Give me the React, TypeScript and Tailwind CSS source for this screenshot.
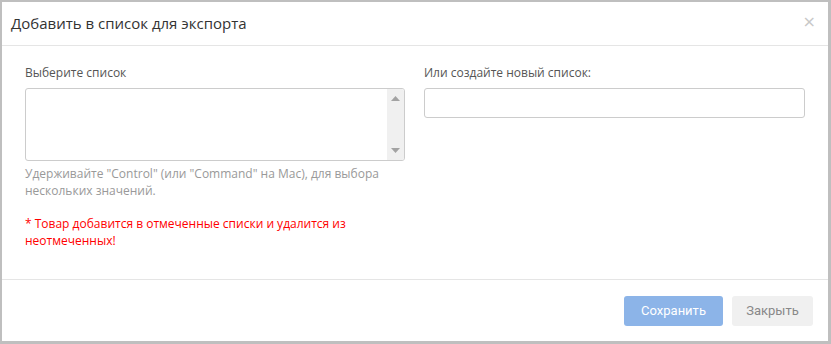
export default function App() {
  return (
    <div className="w-[831px] h-[344px] bg-[#bfbfbf] pl-[2px] pt-[2px] pr-[3px] pb-[3px] font-['Open_Sans',sans-serif]">
      <div className="bg-white h-full flex flex-col">
        {/* header */}
        <div className="h-[44px] flex items-center justify-between pl-[9px] pr-[12px] border-b border-[#e5e5e5]">
          <h4 className="text-[15px] text-[#333] leading-none">Добавить в список для экспорта</h4>
          <button className="text-[#c8c8c8] text-[16px] leading-none font-['DejaVu_Sans',sans-serif] -mt-[4px]">×</button>
        </div>

        {/* body */}
        <div className="flex-1 flex gap-[19px] pl-[22px] pr-[23px] pt-[18px] text-[12px]">
          <div className="w-[381px]">
            <label className="block text-[#555] leading-[17px] mb-[7px] pl-[1px]">Выберите список</label>
            <div className="h-[73px] border border-[#ccc] rounded-[3px] flex justify-end overflow-hidden ml-[1px]">
              <div className="w-[17px] bg-[#f0f0f0] flex flex-col items-center justify-between py-[7px]">
                <svg width="9" height="5" viewBox="0 0 9 5">
                  <path d="M0 5 L4.5 0 L9 5 Z" fill="#a3a3a3" />
                </svg>
                <svg width="9" height="5" viewBox="0 0 9 5">
                  <path d="M0 0 L4.5 5 L9 0 Z" fill="#a3a3a3" />
                </svg>
              </div>
            </div>
            <p className="text-[#999] leading-[17px] mt-[4px] pl-[1px]">
              Удерживайте "Control" (или "Command" на Mac), для выбора нескольких значений.
            </p>
            <p className="text-[#ff0000] leading-[17px] mt-[16px] pl-[1px]">
              * Товар добавится в отмеченные списки и удалится из неотмеченных!
            </p>
          </div>
          <div className="w-[381px]">
            <label className="block text-[#555] leading-[17px] mb-[7px]">Или создайте новый список:</label>
            <input className="w-full h-[30px] border border-[#ccc] rounded-[3px] outline-none px-2" />
          </div>
        </div>

        {/* footer */}
        <div className="h-[62px] border-t border-[#e5e5e5] flex items-center justify-end gap-[9px] pr-[15px] pt-[1px] font-['Roboto',sans-serif] text-[13px]">
          <button className="w-[99px] h-[30px] rounded-[3px] bg-[#8cb4e8] text-white">Сохранить</button>
          <button className="w-[81px] h-[30px] rounded-[3px] bg-[#f0f0f0] text-[#888]">Закрыть</button>
        </div>
      </div>
    </div>
  );
}
